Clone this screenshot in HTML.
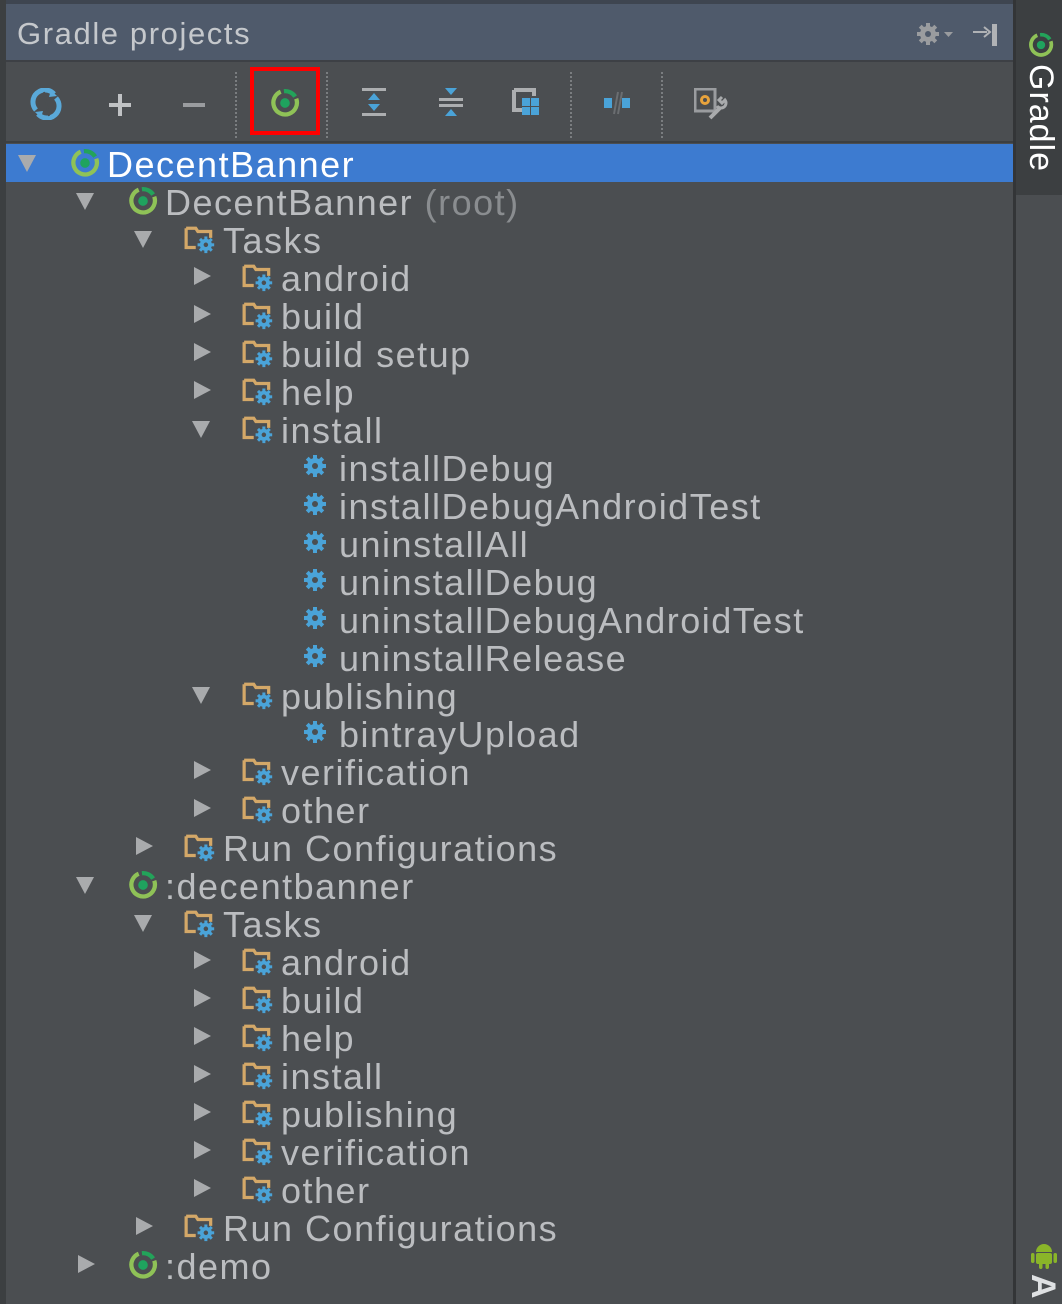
<!DOCTYPE html>
<html><head><meta charset="utf-8"><style>
*{margin:0;padding:0;box-sizing:border-box}
body{width:1062px;height:1304px;background:#4b4e51;position:relative;overflow:hidden;font-family:"Liberation Sans","DejaVu Sans",sans-serif}
#left{position:absolute;left:0;top:0;width:6px;height:1304px;background:#3c3f41}
#hdr{position:absolute;left:6px;top:0;width:1007px;height:62px;background:#4f5a6b;border-top:4px solid #3e4550;border-bottom:2px solid #3d4045}
#hdr .t{position:absolute;left:11px;top:12px;font-size:31px;color:#c5c8cc;letter-spacing:1.6px}
#tb{position:absolute;left:6px;top:62px;width:1007px;height:81px;background:#4b4e51;border-bottom:2px solid #3c3f41}
.sep{position:absolute;top:10px;height:66px;border-left:2px dotted #7a7d80}
#side{position:absolute;left:1013px;top:0;width:49px;height:1304px;background:#4b4e51;border-left:3px solid #333537}
#sidetab{position:absolute;left:1016px;top:0;width:46px;height:195px;background:#3c3f41}
.row{position:absolute;left:6px;width:1007px;height:38px}
.sel{background:#3d7bd0}
.tx{position:absolute;top:1px;font-size:36px;line-height:40px;color:#bbbdc0;white-space:nowrap;letter-spacing:1.5px}
.sel .tx{color:#fff}
.gr{color:#8a8d90}
.tri{position:absolute;top:11px;width:0;height:0}
.open{border-left:9px solid transparent;border-right:9px solid transparent;border-top:17px solid #a9abad}
.closed{top:9px;border-top:9px solid transparent;border-bottom:9px solid transparent;border-left:17px solid #a9abad}
.ic{position:absolute;top:5px}
</style></head><body>
<svg width="0" height="0" style="position:absolute">
<defs>
<symbol id="proj" viewBox="0 0 28 28"><path d="M24.5 10 A11 11 0 1 1 10 3.5" fill="none" stroke="#8fc257" stroke-width="4"/><path d="M13 3 A11 11 0 0 1 23.5 8" fill="none" stroke="#23a35a" stroke-width="4"/><circle cx="14" cy="14" r="4.5" fill="#1fa35e"/></symbol>
<symbol id="gear" viewBox="0 0 24 24"><g fill="#4aa3d8"><circle cx="12" cy="12" r="8"/><rect x="10" y="1" width="4" height="22"/><rect x="1" y="10" width="22" height="4"/><rect x="10" y="1" width="4" height="22" transform="rotate(45 12 12)"/><rect x="10" y="1" width="4" height="22" transform="rotate(-45 12 12)"/></g><circle cx="12" cy="12" r="3" fill="#4b4e51"/></symbol>
<symbol id="fold" viewBox="0 0 30 28"><path d="M2 3h9l2 3h12v6M2 3v18h9" fill="none" stroke="#d4a868" stroke-width="3"/><use href="#gear" x="12" y="10" width="17" height="17"/></symbol>
</defs></svg>
<div id="left"></div>
<div id="hdr"><div class="t">Gradle projects</div>
<svg style="position:absolute;left:910px;top:18px" width="42" height="26" viewBox="0 0 42 26"><circle cx="12" cy="12" r="8" fill="#9a9c9f"/><g fill="#9a9c9f"><rect x="10" y="1" width="4" height="22"/><rect x="1" y="10" width="22" height="4"/><rect x="10" y="1" width="4" height="22" transform="rotate(45 12 12)"/><rect x="10" y="1" width="4" height="22" transform="rotate(-45 12 12)"/></g><circle cx="12" cy="12" r="3" fill="#4f5a6b"/><path d="M28 10h9l-4.5 5z" fill="#9a9c9f"/></svg>
<svg style="position:absolute;left:966px;top:18px" width="28" height="26"><path d="M1 10h14" stroke="#b0b2b5" stroke-width="2"/><path d="M12 5l6 5-6 5" fill="none" stroke="#b0b2b5" stroke-width="2"/><rect x="20" y="2" width="5" height="22" fill="#b0b2b5"/></svg>
</div>
<div id="tb">
<svg style="position:absolute;left:24px;top:26px" width="32" height="32" viewBox="0 0 32 32"><path d="M24 6A12 12 0 0 0 6 22" fill="none" stroke="#5aa9d9" stroke-width="5"/><path d="M8 26A12 12 0 0 0 26 10" fill="none" stroke="#5aa9d9" stroke-width="5"/><path d="M21 2l6 6-8 1z M11 30l-6-6 8-1z" fill="#5aa9d9"/><path d="M14 4l5 24" stroke="#4b4e51" stroke-width="2"/></svg>
<svg style="position:absolute;left:102px;top:31px" width="24" height="24"><rect x="10" y="1" width="4" height="22" fill="#c0c2c4"/><rect x="1" y="10" width="22" height="4" fill="#c0c2c4"/></svg>
<svg style="position:absolute;left:176px;top:31px" width="24" height="24"><rect x="1" y="10" width="22" height="4" fill="#9a9c9f"/></svg>
<div class="sep" style="left:229px"></div>
<div style="position:absolute;left:244px;top:5px;width:70px;height:68px;border:4px solid #ff0000"></div>
<svg style="position:absolute;left:264px;top:26px" width="30" height="30"><use href="#proj" width="30" height="30"/></svg>
<div class="sep" style="left:320px"></div>
<svg style="position:absolute;left:356px;top:26px" width="26" height="30"><rect x="0" y="0" width="24" height="3" fill="#acaeb0"/><rect x="0" y="25" width="24" height="3" fill="#acaeb0"/><path d="M12 5l6 7H6z M12 23l6-7H6z" fill="#4aa3d8"/></svg>
<svg style="position:absolute;left:433px;top:26px" width="26" height="30"><path d="M6 0h12l-6 7z M6 28h12l-6-7z" fill="#4aa3d8"/><rect x="0" y="10" width="24" height="3" fill="#acaeb0"/><rect x="0" y="16" width="24" height="3" fill="#acaeb0"/></svg>
<svg style="position:absolute;left:506px;top:26px" width="30" height="30"><path d="M2 2h20v6M2 2v20h8" fill="none" stroke="#acaeb0" stroke-width="4"/><rect x="10" y="10" width="8" height="8" fill="#4aa3d8"/><rect x="19" y="10" width="8" height="8" fill="#4aa3d8"/><rect x="10" y="19" width="8" height="8" fill="#4aa3d8"/><rect x="19" y="19" width="8" height="8" fill="#4aa3d8"/></svg>
<div class="sep" style="left:564px"></div>
<svg style="position:absolute;left:598px;top:28px" width="30" height="26"><rect x="0" y="8" width="8" height="10" fill="#4aa3d8"/><rect x="18" y="8" width="8" height="10" fill="#4aa3d8"/><path d="M10 24l4-22M14 24l4-22" stroke="#6b6e71" stroke-width="2"/></svg>
<div class="sep" style="left:655px"></div>
<svg style="position:absolute;left:688px;top:26px" width="36" height="34"><rect x="1" y="1" width="20" height="22" fill="none" stroke="#9a9c9f" stroke-width="3"/><circle cx="11" cy="12" r="5" fill="#e8a33c"/><circle cx="11" cy="12" r="2" fill="#4b4e51"/><path d="M16 30l10-10" stroke="#a9abad" stroke-width="4"/><path d="M23 18a5 5 0 1 0 8 -6l-3 3-3-3 3-3" fill="none" stroke="#a9abad" stroke-width="3"/></svg>
</div>
<div id="side"></div>
<div id="sidetab">
<svg style="position:absolute;left:12px;top:32px" width="26" height="26"><use href="#proj" width="26" height="26"/></svg>
<div style="position:absolute;left:4px;top:64px;font-size:34px;color:#fff;transform-origin:0 0;transform:translate(40px,0) rotate(90deg);white-space:nowrap;letter-spacing:1px">Gradle</div>
</div>
<svg style="position:absolute;left:1031px;top:1242px" width="26" height="28" viewBox="0 0 26 28"><g fill="#8ab529"><path d="M5 10a8 8 0 0 1 16 0z"/><rect x="5" y="11" width="16" height="11" rx="2"/><rect x="0" y="11" width="3.5" height="10" rx="1.7"/><rect x="22.5" y="11" width="3.5" height="10" rx="1.7"/><rect x="8" y="20" width="3.5" height="7" rx="1.7"/><rect x="14.5" y="20" width="3.5" height="7" rx="1.7"/></g></svg>
<div style="position:absolute;left:1028px;top:1274px;font-size:34px;color:#dfe1e3;transform-origin:0 0;transform:translate(34px,0) rotate(90deg);font-weight:bold">A</div>

<div class="row sel" style="top:144px"><div class="tri open" style="left:12px"></div><svg class="ic" style="left:64px;top:4px" width="30" height="30"><use href="#proj" width="30" height="30"/></svg><div class="tx" style="left:101px">DecentBanner</div></div>
<div class="row" style="top:182px"><div class="tri open" style="left:70px"></div><svg class="ic" style="left:122px;top:4px" width="30" height="30"><use href="#proj" width="30" height="30"/></svg><div class="tx" style="left:159px">DecentBanner <span class="gr">(root)</span></div></div>
<div class="row" style="top:220px"><div class="tri open" style="left:128px"></div><svg class="ic" style="left:178px" width="32" height="30"><use href="#fold" width="32" height="30"/></svg><div class="tx" style="left:217px">Tasks</div></div>
<div class="row" style="top:258px"><div class="tri closed" style="left:188px"></div><svg class="ic" style="left:236px" width="32" height="30"><use href="#fold" width="32" height="30"/></svg><div class="tx" style="left:275px">android</div></div>
<div class="row" style="top:296px"><div class="tri closed" style="left:188px"></div><svg class="ic" style="left:236px" width="32" height="30"><use href="#fold" width="32" height="30"/></svg><div class="tx" style="left:275px">build</div></div>
<div class="row" style="top:334px"><div class="tri closed" style="left:188px"></div><svg class="ic" style="left:236px" width="32" height="30"><use href="#fold" width="32" height="30"/></svg><div class="tx" style="left:275px">build setup</div></div>
<div class="row" style="top:372px"><div class="tri closed" style="left:188px"></div><svg class="ic" style="left:236px" width="32" height="30"><use href="#fold" width="32" height="30"/></svg><div class="tx" style="left:275px">help</div></div>
<div class="row" style="top:410px"><div class="tri open" style="left:186px"></div><svg class="ic" style="left:236px" width="32" height="30"><use href="#fold" width="32" height="30"/></svg><div class="tx" style="left:275px">install</div></div>
<div class="row" style="top:448px"><svg class="ic" style="left:297px;top:6px" width="24" height="24"><use href="#gear" width="24" height="24"/></svg><div class="tx" style="left:333px">installDebug</div></div>
<div class="row" style="top:486px"><svg class="ic" style="left:297px;top:6px" width="24" height="24"><use href="#gear" width="24" height="24"/></svg><div class="tx" style="left:333px">installDebugAndroidTest</div></div>
<div class="row" style="top:524px"><svg class="ic" style="left:297px;top:6px" width="24" height="24"><use href="#gear" width="24" height="24"/></svg><div class="tx" style="left:333px">uninstallAll</div></div>
<div class="row" style="top:562px"><svg class="ic" style="left:297px;top:6px" width="24" height="24"><use href="#gear" width="24" height="24"/></svg><div class="tx" style="left:333px">uninstallDebug</div></div>
<div class="row" style="top:600px"><svg class="ic" style="left:297px;top:6px" width="24" height="24"><use href="#gear" width="24" height="24"/></svg><div class="tx" style="left:333px">uninstallDebugAndroidTest</div></div>
<div class="row" style="top:638px"><svg class="ic" style="left:297px;top:6px" width="24" height="24"><use href="#gear" width="24" height="24"/></svg><div class="tx" style="left:333px">uninstallRelease</div></div>
<div class="row" style="top:676px"><div class="tri open" style="left:186px"></div><svg class="ic" style="left:236px" width="32" height="30"><use href="#fold" width="32" height="30"/></svg><div class="tx" style="left:275px">publishing</div></div>
<div class="row" style="top:714px"><svg class="ic" style="left:297px;top:6px" width="24" height="24"><use href="#gear" width="24" height="24"/></svg><div class="tx" style="left:333px">bintrayUpload</div></div>
<div class="row" style="top:752px"><div class="tri closed" style="left:188px"></div><svg class="ic" style="left:236px" width="32" height="30"><use href="#fold" width="32" height="30"/></svg><div class="tx" style="left:275px">verification</div></div>
<div class="row" style="top:790px"><div class="tri closed" style="left:188px"></div><svg class="ic" style="left:236px" width="32" height="30"><use href="#fold" width="32" height="30"/></svg><div class="tx" style="left:275px">other</div></div>
<div class="row" style="top:828px"><div class="tri closed" style="left:130px"></div><svg class="ic" style="left:178px" width="32" height="30"><use href="#fold" width="32" height="30"/></svg><div class="tx" style="left:217px">Run Configurations</div></div>
<div class="row" style="top:866px"><div class="tri open" style="left:70px"></div><svg class="ic" style="left:122px;top:4px" width="30" height="30"><use href="#proj" width="30" height="30"/></svg><div class="tx" style="left:159px">:decentbanner</div></div>
<div class="row" style="top:904px"><div class="tri open" style="left:128px"></div><svg class="ic" style="left:178px" width="32" height="30"><use href="#fold" width="32" height="30"/></svg><div class="tx" style="left:217px">Tasks</div></div>
<div class="row" style="top:942px"><div class="tri closed" style="left:188px"></div><svg class="ic" style="left:236px" width="32" height="30"><use href="#fold" width="32" height="30"/></svg><div class="tx" style="left:275px">android</div></div>
<div class="row" style="top:980px"><div class="tri closed" style="left:188px"></div><svg class="ic" style="left:236px" width="32" height="30"><use href="#fold" width="32" height="30"/></svg><div class="tx" style="left:275px">build</div></div>
<div class="row" style="top:1018px"><div class="tri closed" style="left:188px"></div><svg class="ic" style="left:236px" width="32" height="30"><use href="#fold" width="32" height="30"/></svg><div class="tx" style="left:275px">help</div></div>
<div class="row" style="top:1056px"><div class="tri closed" style="left:188px"></div><svg class="ic" style="left:236px" width="32" height="30"><use href="#fold" width="32" height="30"/></svg><div class="tx" style="left:275px">install</div></div>
<div class="row" style="top:1094px"><div class="tri closed" style="left:188px"></div><svg class="ic" style="left:236px" width="32" height="30"><use href="#fold" width="32" height="30"/></svg><div class="tx" style="left:275px">publishing</div></div>
<div class="row" style="top:1132px"><div class="tri closed" style="left:188px"></div><svg class="ic" style="left:236px" width="32" height="30"><use href="#fold" width="32" height="30"/></svg><div class="tx" style="left:275px">verification</div></div>
<div class="row" style="top:1170px"><div class="tri closed" style="left:188px"></div><svg class="ic" style="left:236px" width="32" height="30"><use href="#fold" width="32" height="30"/></svg><div class="tx" style="left:275px">other</div></div>
<div class="row" style="top:1208px"><div class="tri closed" style="left:130px"></div><svg class="ic" style="left:178px" width="32" height="30"><use href="#fold" width="32" height="30"/></svg><div class="tx" style="left:217px">Run Configurations</div></div>
<div class="row" style="top:1246px"><div class="tri closed" style="left:72px"></div><svg class="ic" style="left:122px;top:4px" width="30" height="30"><use href="#proj" width="30" height="30"/></svg><div class="tx" style="left:159px">:demo</div></div>
</body></html>
